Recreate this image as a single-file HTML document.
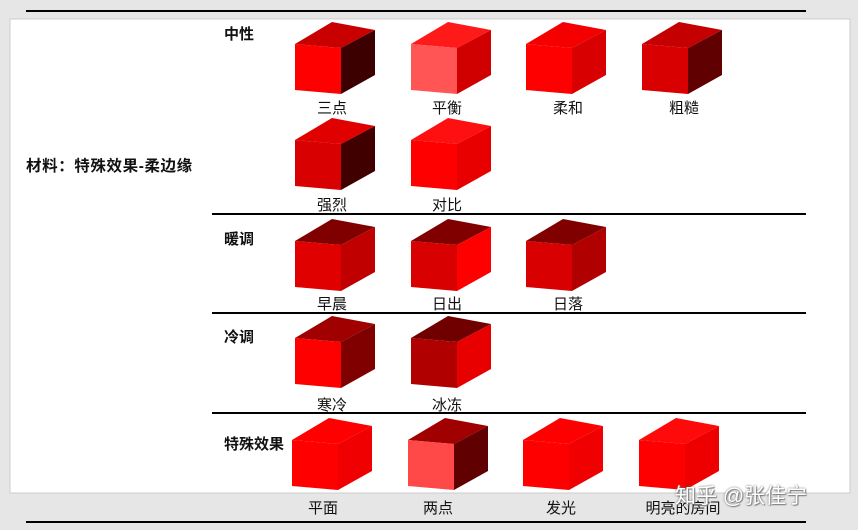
<!DOCTYPE html>
<html><head><meta charset="utf-8"><style>
body{margin:0;width:858px;height:530px;background:#e6e6e6;position:relative;overflow:hidden;font-family:"Liberation Sans","Noto Sans CJK SC",sans-serif;}
.t{position:absolute;font-size:15px;color:#111;white-space:nowrap;}
.b{font-weight:bold;}
.l{position:absolute;font-size:15px;color:#111;width:80px;text-align:center;}
svg{position:absolute;left:0;top:0;}
</style></head><body>
<svg width="858" height="530">
<rect x="10" y="19" width="840" height="474" fill="#fff" stroke="#ccc"/>
<rect x="26" y="10" width="780" height="2" fill="#000"/>
<rect x="212" y="213" width="594" height="2" fill="#000"/>
<rect x="212" y="312" width="594" height="2" fill="#000"/>
<rect x="212" y="412" width="594" height="2" fill="#000"/>
<rect x="26" y="521" width="780" height="2" fill="#000"/>
<g id="cubes"></g>
</svg>
<div class="t b" style="left:224px;top:23px">中性</div>
<div class="t b" style="left:224px;top:228px">暖调</div>
<div class="t b" style="left:224px;top:326px">冷调</div>
<div class="t b" style="left:224px;top:433px">特殊效果</div>
<div class="t b" style="left:26px;top:154px;font-size:15.5px;letter-spacing:0.6px">材料：特殊效果-柔边缘</div>
<div class="l" style="left:292px;top:97px">三点</div>
<div class="l" style="left:407px;top:97px">平衡</div>
<div class="l" style="left:528px;top:97px">柔和</div>
<div class="l" style="left:644px;top:97px">粗糙</div>
<div class="l" style="left:292px;top:194px">强烈</div>
<div class="l" style="left:407px;top:194px">对比</div>
<div class="l" style="left:292px;top:293px">早晨</div>
<div class="l" style="left:407px;top:293px">日出</div>
<div class="l" style="left:528px;top:293px">日落</div>
<div class="l" style="left:292px;top:394px">寒冷</div>
<div class="l" style="left:407px;top:394px">冰冻</div>
<div class="l" style="left:283px;top:497px">平面</div>
<div class="l" style="left:398px;top:497px">两点</div>
<div class="l" style="left:521px;top:497px">发光</div>
<div class="l" style="left:643px;top:497px">明亮的房间</div>
<div class="t" style="left:675px;top:480px;font-size:21px;color:#fff;text-shadow:0 0 2px #666,1px 1px 1px #888">知乎 @张佳宁</div>
<script>
var cubes=[
[295,22,'#c80000','#ff0000','#3c0000'],
[411,22,'#ff1a1a','#ff5555','#d00000'],
[526,22,'#f40000','#ff0000','#d80000'],
[642,22,'#c40000','#d80000','#600000'],
[295,118,'#e00000','#d80000','#400000'],
[411,118,'#ff1010','#ff0000','#e80000'],
[295,219,'#800000','#e00000','#c00000'],
[411,219,'#800000','#d80000','#ff0000'],
[526,219,'#800000','#d80000','#b00000'],
[295,316,'#a00000','#ff0000','#800000'],
[411,316,'#700000','#b00000','#e80000'],
[292,418,'#ff0000','#ff0000','#f00000'],
[408,418,'#a00000','#ff4848','#600000'],
[523,418,'#ff0000','#ff0000','#f00000'],
[639,418,'#ff0a0a','#ff0000','#ee0000']];
var s='';
cubes.forEach(function(c){
var x=c[0],y=c[1];
function p(a){return a.map(function(q){return (x+q[0])+','+(y+q[1])}).join(' ')}
s+='<polygon points="'+p([[0,22],[37,0],[80,8],[46,26]])+'" fill="'+c[2]+'"/>';
s+='<polygon points="'+p([[0,22],[46,26],[46,72],[0,68]])+'" fill="'+c[3]+'"/>';
s+='<polygon points="'+p([[46,26],[80,8],[80,53],[46,72]])+'" fill="'+c[4]+'"/>';
});
document.getElementById('cubes').innerHTML=s;
</script>
</body></html>
